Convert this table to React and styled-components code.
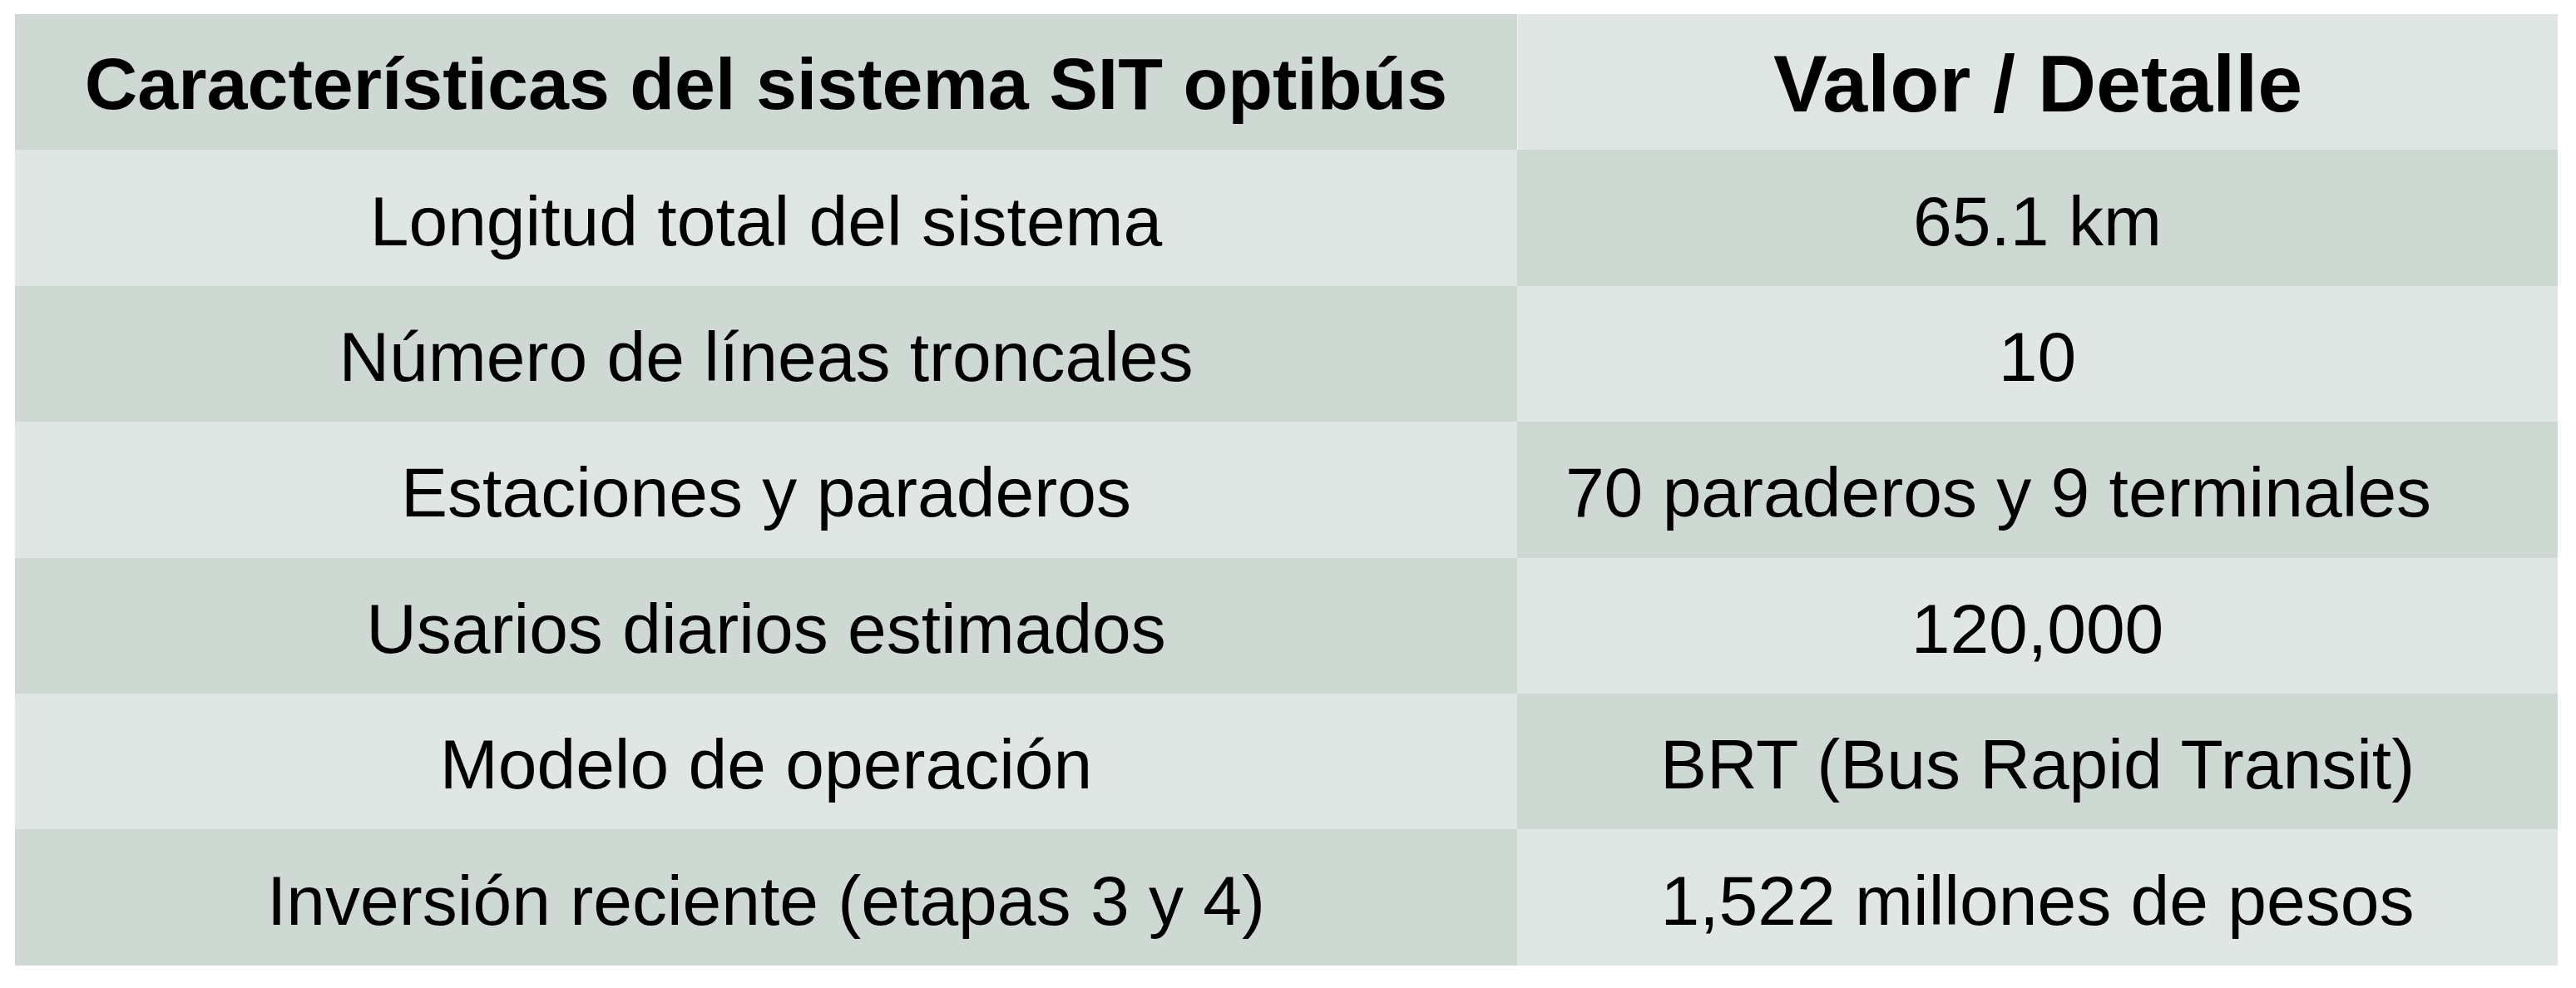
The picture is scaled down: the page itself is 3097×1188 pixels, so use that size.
import React from 'react'
import styled, { createGlobalStyle } from 'styled-components'

const GlobalStyle = createGlobalStyle`
    html, body {
        margin: 0;
        padding: 0;
        background: #ffffff;
    }
`

const Page = styled.div`
    padding: 17px 22px 27px 18px;
`

const Grid = styled.div`
    display: grid;
    grid-template-columns: 1806px 1251px;
    grid-auto-rows: 163.4px;
    font-family: "Liberation Sans", Arial, Helvetica, sans-serif;
    color: #000;
`

const Cell = styled.div`
    display: flex;
    align-items: center;
    justify-content: center;
    padding-top: 8px;
    padding-right: ${(props) => props.shift || 0}px;
    box-sizing: border-box;
    font-size: 84px;
    white-space: nowrap;
    background-color: ${(props) => (props.dark ? '#cfd9d4' : '#e0e6e3')};
`

const HeaderCell = styled(Cell)`
    font-weight: 700;
    font-size: ${(props) => props.size || 88}px;
    padding-top: 4px;
    ${(props) => (props.divider ? 'border-left: 1px solid #f2f5f3;' : '')}
`

const rows = [
    ['Longitud total del sistema', '65.1 km'],
    ['Número de líneas troncales', '10'],
    ['Estaciones y paraderos', '70 paraderos y 9 terminales', 94],
    ['Usarios diarios estimados', '120,000'],
    ['Modelo de operación', 'BRT (Bus Rapid Transit)'],
    ['Inversión reciente (etapas 3 y 4)', '1,522 millones de pesos'],
]

export default function App() {
    return (
        <Page>
            <GlobalStyle />
            <Grid>
                <HeaderCell dark>Características del sistema SIT optibús</HeaderCell>
                <HeaderCell divider size={97}>Valor / Detalle</HeaderCell>
                {rows.map(([label, value, shift], i) => (
                    <React.Fragment key={label}>
                        <Cell dark={i % 2 === 1}>{label}</Cell>
                        <Cell dark={i % 2 === 0} shift={shift}>{value}</Cell>
                    </React.Fragment>
                ))}
            </Grid>
        </Page>
    )
}
